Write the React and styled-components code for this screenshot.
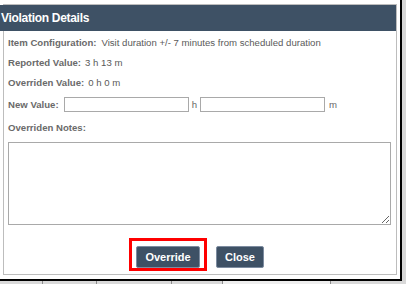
import React from "react";
import styled, { createGlobalStyle } from "styled-components";

const Global = createGlobalStyle`
  html, body { margin: 0; padding: 0; background: #ffffff; }
  body { font-family: "Liberation Sans", Arial, sans-serif; }
  * { box-sizing: border-box; }
`;

const Page = styled.div`
  width: 406px;
  height: 284px;
  overflow: hidden;
  display: flex;
  flex-direction: column;
`;

const TopRow = styled.div`
  display: flex;
  height: 281px;
  flex: none;
`;

const Frame = styled.div`
  width: 402px;
  height: 281px;
  background: #ffffff;
  border-right: 2px solid #000;
  border-bottom: 2px solid #000;
  padding: 4px 0 0 3px;
`;

const Filler = styled.div`
  flex: 1;
  background: #d6d6d6;
`;

const BottomStrip = styled.div`
  display: flex;
  flex: 1;
  background: #d9d9d9;
`;

const Cell = styled.div`
  width: ${(p) => p.$w}px;
  flex: ${(p) => (p.$grow ? 1 : "none")};
  border-left: ${(p) => (p.$first ? "none" : "1px solid #8c8c8c")};
  background: ${(p) => (p.$light ? "#eeeeee" : "#d9d9d9")};
`;

const Dialog = styled.div`
  width: 394px;
  height: 271px;
  border: 1px solid #bdbdbd;
  display: flex;
  flex-direction: column;
`;

const Header = styled.div`
  margin-left: -4px;
  height: 26px;
  background: #3e5165;
  color: #ffffff;
  font-weight: bold;
  font-size: 12px;
  display: flex;
  align-items: center;
  padding-left: 1px;
  letter-spacing: -0.3px;
`;

const Body = styled.div`
  padding: 1px 4px 0 4px;
  display: flex;
  flex-direction: column;
  color: #555;
  font-size: 9.6px;
`;

const Row = styled.div`
  display: flex;
  align-items: center;
  height: ${(p) => p.$h || 20}px;
`;

const Label = styled.span`
  font-weight: bold;
  color: #6a6a6a;
  margin-right: ${(p) => (p.$gap ?? 4)}px;
`;

const Value = styled.span`
  color: #5a5a5a;
`;

const TextInput = styled.input`
  width: 125px;
  height: 15px;
  border: 1px solid #a9a9a9;
  padding: 0 2px;
  margin: 0;
  font: inherit;
  outline: none;
`;

const Unit = styled.span`
  color: #666;
  margin: 0 ${(p) => p.$r ?? 3}px 0 ${(p) => p.$l ?? 3}px;
`;

const Notes = styled.textarea`
  margin-top: 5px;
  width: 383px;
  height: 83px;
  border: 1px solid #a9a9a9;
  padding: 2px;
  font: inherit;
  resize: both;
  outline: none;
  display: block;
`;

const Actions = styled.div`
  display: flex;
  justify-content: center;
  gap: 16px;
  margin-top: 21px;
`;

const ButtonWrap = styled.div`
  position: relative;
  display: flex;
`;

const Highlight = styled.div`
  position: absolute;
  left: -7px;
  top: -8px;
  width: 78px;
  height: 33px;
  border: 3px solid #ff0000;
  pointer-events: none;
`;

const Button = styled.button`
  width: ${(p) => p.$w}px;
  height: 22px;
  background: #3e5165;
  color: #ffffff;
  border: 1px solid #7d8ca0;
  border-radius: 2px;
  font-family: "Liberation Sans", Arial, sans-serif;
  font-weight: bold;
  font-size: 11px;
  padding: 0;
  cursor: pointer;
`;

export default function App() {
  return (
    <>
      <Global />
      <Page>
        <TopRow>
          <Frame>
            <Dialog>
              <Header>Violation Details</Header>
              <Body>
                <Row>
                  <Label $gap={5}>Item Configuration:</Label>
                  <Value>Visit duration +/- 7 minutes from scheduled duration</Value>
                </Row>
                <Row>
                  <Label>Reported Value:</Label>
                  <Value>3 h 13 m</Value>
                </Row>
                <Row>
                  <Label>Overriden Value:</Label>
                  <Value>0 h 0 m</Value>
                </Row>
                <Row $h={25}>
                  <Label $gap={5}>New Value:</Label>
                  <TextInput type="text" />
                  <Unit>h</Unit>
                  <TextInput type="text" />
                  <Unit $l={4}>m</Unit>
                </Row>
                <Row>
                  <Label>Overriden Notes:</Label>
                </Row>
                <Notes />
                <Actions>
                  <ButtonWrap>
                    <Button $w={64}>Override</Button>
                    <Highlight />
                  </ButtonWrap>
                  <ButtonWrap>
                    <Button $w={48}>Close</Button>
                  </ButtonWrap>
                </Actions>
              </Body>
            </Dialog>
          </Frame>
          <Filler />
        </TopRow>
        <BottomStrip>
          <Cell $w={42} $first />
          <Cell $w={54} />
          <Cell $w={75} />
          <Cell $w={51} />
          <Cell $w={108} $light />
          <Cell $grow />
        </BottomStrip>
      </Page>
    </>
  );
}
